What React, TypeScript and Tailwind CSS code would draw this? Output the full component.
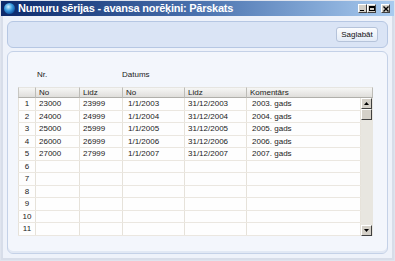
import React from "react";

const rows = [
  ["1", "23000", "23999", "1/1/2003", "31/12/2003", "2003. gads"],
  ["2", "24000", "24999", "1/1/2004", "31/12/2004", "2004. gads"],
  ["3", "25000", "25999", "1/1/2005", "31/12/2005", "2005. gads"],
  ["4", "26000", "26999", "1/1/2006", "31/12/2006", "2006. gads"],
  ["5", "27000", "27999", "1/1/2007", "31/12/2007", "2007. gads"],
  ["6", "", "", "", "", ""],
  ["7", "", "", "", "", ""],
  ["8", "", "", "", "", ""],
  ["9", "", "", "", "", ""],
  ["10", "", "", "", "", ""],
  ["11", "", "", "", "", ""],
];

const font = { fontFamily: '"Liberation Sans", Arial, sans-serif' };

function WinBtn({ children }: { children: React.ReactNode }) {
  return (
    <div className="w-[9px] h-[9px] bg-[#d4d0c8] border-t border-l border-t-white border-l-white border-r border-b border-r-[#404040] border-b-[#404040] flex items-center justify-center">
      {children}
    </div>
  );
}

function ScrollBtn({ up }: { up?: boolean }) {
  return (
    <div className="w-[11px] h-[11px] bg-[#d4d0c8] border-t border-l border-t-white border-l-white border-r border-b border-r-[#404040] border-b-[#404040] flex items-center justify-center">
      {up !== undefined && (
        <svg width="5" height="3" viewBox="0 0 5 3">
          {up ? <polygon points="2.5,0 5,3 0,3" fill="#000" /> : <polygon points="0,0 5,0 2.5,3" fill="#000" />}
        </svg>
      )}
    </div>
  );
}

export default function App() {
  const widths = ["w-[18px]", "w-[44px]", "w-[43px]", "w-[62px]", "w-[62px]", "w-[114px]"];
  return (
    <div className="w-[395px] h-[261px] bg-[#dfe4ee] p-px flex flex-col overflow-hidden text-[#222]" style={font}>
      {/* Title bar */}
      <div className="h-[15px] flex items-center bg-gradient-to-r from-[#0c286a] via-[#4a72ae] to-[#a9cbef] pl-[2px] pr-[4px] shrink-0">
        <svg width="13" height="13" viewBox="0 0 13 13" className="mr-[2px]">
          <defs>
            <radialGradient id="g" cx="0.4" cy="0.35" r="0.7">
              <stop offset="0" stopColor="#cfefff" />
              <stop offset="0.5" stopColor="#3a9be0" />
              <stop offset="1" stopColor="#0b4a98" />
            </radialGradient>
          </defs>
          <circle cx="6.5" cy="6.5" r="5.5" fill="url(#g)" />
        </svg>
        <span className="text-white font-bold text-[11px] leading-none tracking-[-0.25px]">Numuru sērijas - avansa norēķini: Pārskats</span>
        <div className="ml-auto flex items-center">
          <WinBtn>
            <div className="w-[4px] h-[1.5px] bg-black mt-[4px] -ml-[1px]" />
          </WinBtn>
          <WinBtn>
            <div className="w-[6px] h-[5px] border border-black border-t-2" />
          </WinBtn>
          <div className="w-[5px]" />
          <WinBtn>
            <svg width="6" height="6" viewBox="0 0 6 6">
              <path d="M0.5 0.5 L5.5 5.5 M5.5 0.5 L0.5 5.5" stroke="#000" strokeWidth="1.4" />
            </svg>
          </WinBtn>
        </div>
      </div>

      {/* Body */}
      <div className="flex-1 bg-[#eef2fa] border-l-2 border-r-2 border-b-2 border-[#d7dde9] px-[4px] pt-[5px] pb-[4px] flex flex-col gap-[3px]">
        {/* Top panel */}
        <div className="h-[27px] rounded-[6px] border border-[#b6c7e3] bg-[#dae4f5] flex items-center justify-end pr-[9px]">
          <div className="h-[15px] w-[42px] rounded-[3px] border border-[#b5c3da] bg-gradient-to-b from-[#fbfcfe] to-[#e3ebf7] flex items-center justify-center text-[8px] text-[#111]">
            Saglabāt
          </div>
        </div>

        {/* Main panel */}
        <div className="flex-1 rounded-[6px] border border-[#c4d1e7] bg-[#f3f6fc] shadow-[inset_0_-2px_0_#e1e8f4] pl-[10px] pt-[17px]">
          <div className="h-[18px] flex text-[8px] text-[#222] items-start">
            <span className="ml-[19px] w-[85px]">Nr.</span>
            <span>Datums</span>
          </div>
          <div className="w-[355px]">
            {/* Header */}
            <div className="flex h-[11px] text-[8px] leading-[10px] text-[#222]">
              {["", "No", "Lidz", "No", "Lidz", "Komentārs"].map((h, i) => (
                <div
                  key={i}
                  className={`${i === 5 ? "w-[126px]" : widths[i]} h-full bg-gradient-to-b from-[#f6f6f5] to-[#dfdedb] border-r border-b border-r-[#bdbcb7] border-b-[#b0afaa] border-t border-t-[#e6e5e1] ${i === 0 ? "border-l border-l-[#c8c7c2]" : ""} pl-[3px]`}
                >
                  {h}
                </div>
              ))}
            </div>
            {/* Rows + scrollbar */}
            <div className="flex h-[138px]">
              <div className="w-[343px] bg-[#fefefe]">
                {rows.map((r, ri) => (
                  <div key={ri} className="flex h-[12.5px] text-[8px] leading-[12px] border-b border-[#ebe7e0]">
                    {r.map((c, ci) => (
                      <div
                        key={ci}
                        className={`${widths[ci]} h-full border-r border-[#e6e2da] ${ci === 0 ? "text-center border-l" : ci === 3 || ci === 5 ? "pl-[5px]" : "pl-[3px]"}`}
                      >
                        {c}
                      </div>
                    ))}
                  </div>
                ))}
              </div>
              <div className="w-[12px] bg-[#e8e6e0] flex flex-col">
                <ScrollBtn up />
                <ScrollBtn />
                <div className="flex-1" />
                <ScrollBtn up={false} />
              </div>
            </div>
          </div>
        </div>
      </div>
    </div>
  );
}
